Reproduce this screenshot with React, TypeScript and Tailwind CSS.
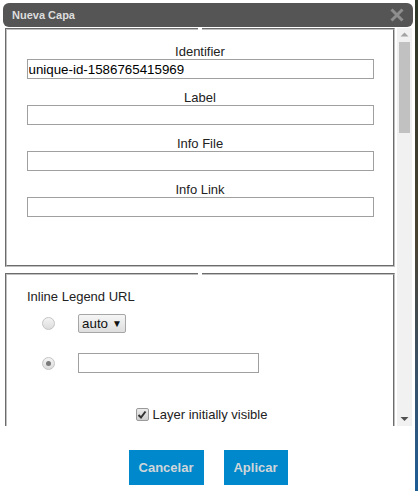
import React from 'react';

const font = { fontFamily: '"Liberation Sans", Arial, sans-serif' };

const Field: React.FC<{ label: string; value?: string }> = ({ label, value = '' }) => (
  <div className="flex flex-col items-center">
    <label className="text-[13px] leading-[15px] text-[#222]">{label}</label>
    <input
      type="text"
      defaultValue={value}
      className="mt-0 h-[20px] w-[347px] border border-[#a0a0a0] bg-white px-[1px] text-[13.33px] text-black outline-none"
    />
  </div>
);

const Radio: React.FC<{ checked?: boolean }> = ({ checked }) => (
  <span className="flex h-[13px] w-[13px] items-center justify-center rounded-full border border-[#c4c4c4] bg-gradient-to-b from-[#f4f4f4] to-[#dcdcdc]">
    {checked && <span className="h-[5px] w-[5px] rounded-full bg-[#7a7a7a]" />}
  </span>
);

const Scrollbar: React.FC = () => (
  <div className="flex w-[15px] flex-col items-center bg-[#f1f1f1]">
    <svg width="15" height="14" viewBox="0 0 15 14">
      <path d="M3.5 8.5 L7.5 4.5 L11.5 8.5 Z" fill="#a3a3a3" />
    </svg>
    <div className="h-[91px] w-[11px] bg-[#c1c1c1]" />
    <div className="flex-1" />
    <svg width="15" height="14" viewBox="0 0 15 14">
      <path d="M3.5 5 L7.5 9 L11.5 5 Z" fill="#505050" />
    </svg>
  </div>
);

export default function App() {
  return (
    <div className="flex h-[491px] w-[418px] overflow-hidden bg-white" style={font}>
      <div className="flex w-[415px] flex-col bg-white pl-[3px] pr-[2px] pt-[3px]">
        {/* title bar */}
        <div className="flex h-[24px] items-center justify-between rounded-[6px] bg-[#555555] pl-[9px] pr-[8px]">
          <span className="text-[11px] font-bold text-[#dddddd]">Nueva Capa</span>
          <svg width="16" height="16" viewBox="0 0 16 16">
            <path d="M2.5 2.5 L13.5 13.5 M13.5 2.5 L2.5 13.5" stroke="#8e8e8e" strokeWidth="3" />
          </svg>
        </div>

        {/* scroll area */}
        <div className="ml-[2px] mr-[1px] mt-[1px] flex h-[398px]">
          <div className="w-[392px] overflow-hidden">
            <fieldset className="h-[239px] w-[390px] border-2 border-[#c0c0c0] [border-style:groove]">
              <legend className="mx-auto px-[2px]" />
              <div className="flex flex-col gap-[11px] pt-[14px]">
                <Field label="Identifier" value="unique-id-1586765415969" />
                <Field label="Label" />
                <Field label="Info File" />
                <Field label="Info Link" />
              </div>
            </fieldset>

            <fieldset className="mt-[6px] h-[400px] w-[390px] border-2 border-[#c0c0c0] [border-style:groove]">
              <legend className="mx-auto px-[2px]" />
              <div className="pl-[20px] pt-[14px]">
                <div className="text-[13px] leading-[15px] text-[#222]">Inline Legend URL</div>
                <div className="mt-[10px] flex items-center">
                  <div className="flex w-[51px] justify-center pr-[8px]">
                    <Radio />
                  </div>
                  <div className="flex h-[19px] w-[48px] items-center justify-center gap-[4px] rounded-[2px] border border-[#a6a6a6] bg-gradient-to-b from-[#f6f6f6] to-[#dedede] text-[13.33px] text-[#111]">
                    <span>auto</span>
                    <span className="text-[10px] leading-none">▼</span>
                  </div>
                </div>
                <div className="mt-[20px] flex items-center">
                  <div className="flex w-[51px] justify-center pr-[8px]">
                    <Radio checked />
                  </div>
                  <input
                    type="text"
                    className="h-[20px] w-[181px] border border-[#a0a0a0] bg-white outline-none"
                  />
                </div>
              </div>
              <div className="mt-[34px] flex items-center justify-center gap-[4px] pl-[3px]">
                <span className="flex h-[13px] w-[13px] items-center justify-center rounded-[2px] border border-[#9a9a9a] bg-gradient-to-b from-[#ececec] to-[#cfcfcf]">
                  <svg width="10" height="10" viewBox="0 0 10 10">
                    <path d="M1.5 5 L4 7.5 L8.5 1.5" stroke="#333" strokeWidth="2" fill="none" />
                  </svg>
                </span>
                <span className="text-[13px] leading-[15px] text-[#222]">Layer initially visible</span>
              </div>
            </fieldset>
          </div>
          <Scrollbar />
        </div>

        {/* buttons */}
        <div className="flex justify-center gap-[20px] pt-[24px]">
          <button className="h-[35px] w-[75px] bg-[#0088cc] text-[13px] font-bold text-[#cfd6da]">Cancelar</button>
          <button className="h-[35px] w-[64px] bg-[#0088cc] text-[13px] font-bold text-[#cfd6da]">Aplicar</button>
        </div>
      </div>
      <div className="flex-1 bg-gradient-to-b from-[#2c3526] via-[#4b4434] to-[#1b5c96]" />
    </div>
  );
}
